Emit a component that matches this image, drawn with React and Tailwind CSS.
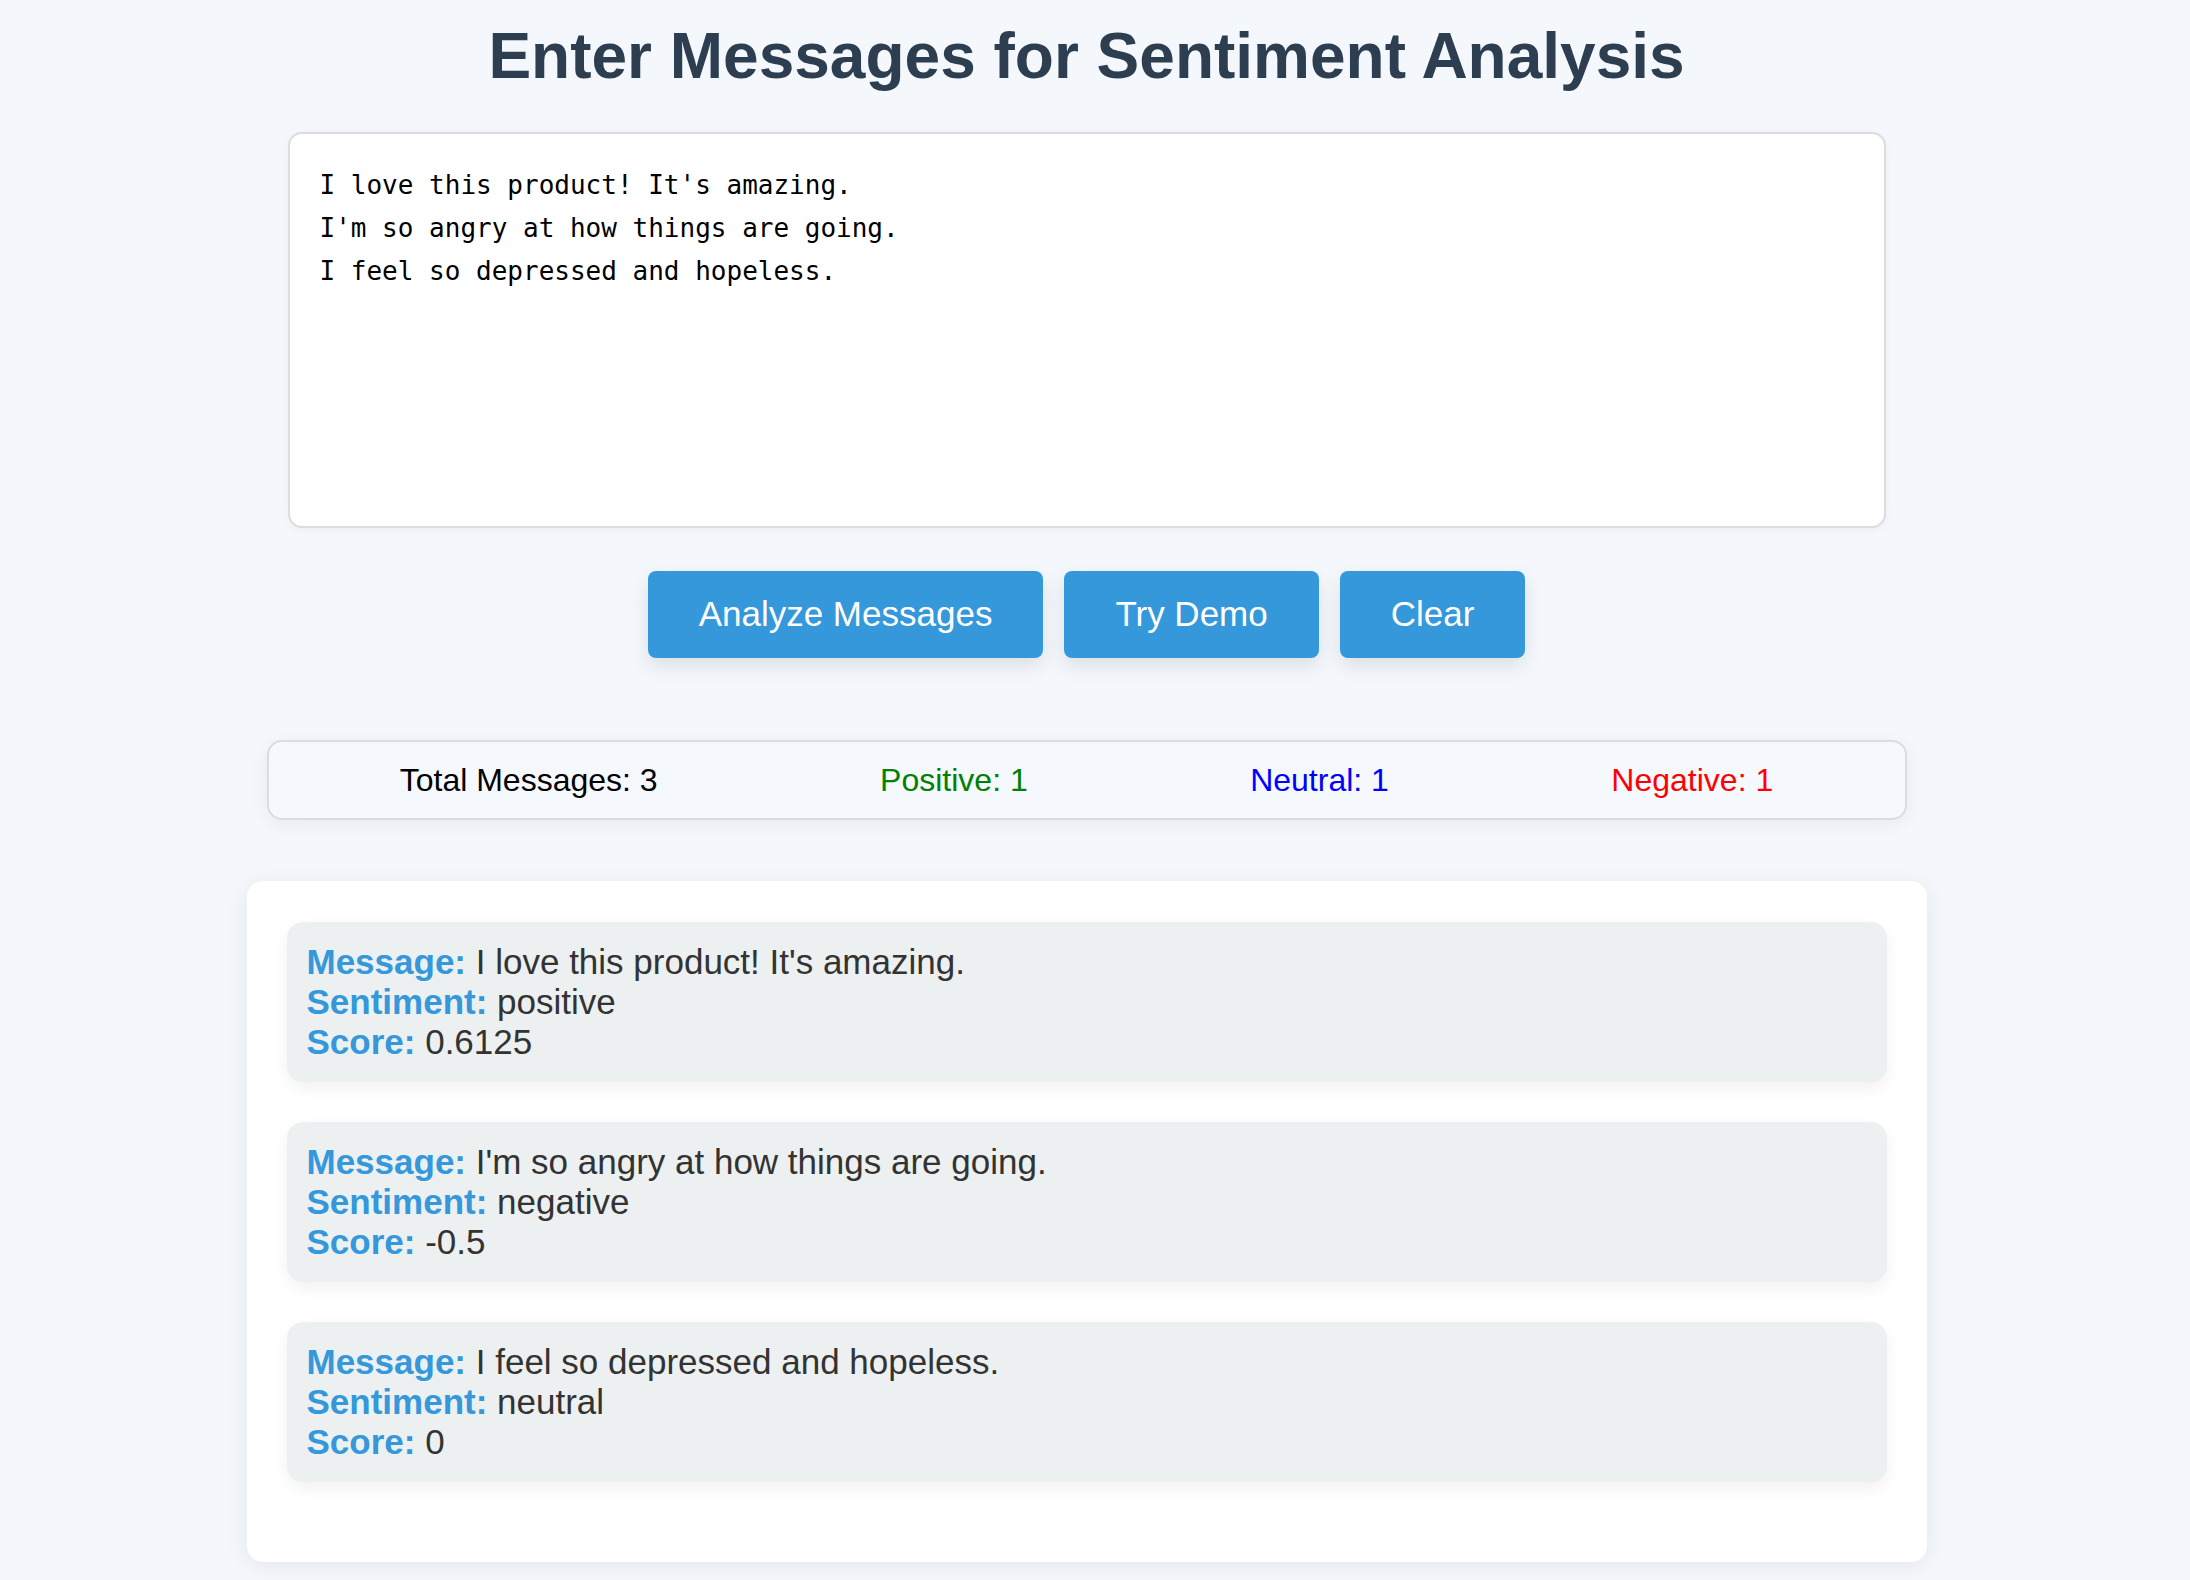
import React from 'react';

const results = [
  { message: "I love this product! It's amazing.", sentiment: 'positive', score: '0.6125' },
  { message: "I'm so angry at how things are going.", sentiment: 'negative', score: '-0.5' },
  { message: 'I feel so depressed and hopeless.', sentiment: 'neutral', score: '0' },
];

const defaultText = "I love this product! It's amazing.\nI'm so angry at how things are going.\nI feel so depressed and hopeless.";

export default function App() {
  return (
    <div className="min-h-screen bg-[#f4f7fb] font-['Liberation_Sans',Arial,sans-serif]">
      <div className="flex flex-col items-center pr-[17px] pt-[19px] pb-[10px]">
        <h1 className="text-[64px] leading-[74px] font-bold text-[#2c3e50] text-center">
          Enter Messages for Sentiment Analysis
        </h1>

        <textarea
          className="mt-[39px] w-[1598px] h-[396px] bg-white border-2 border-[#dddddd] rounded-[14px] p-[30px] font-['DejaVu_Sans_Mono',monospace] text-[26px] leading-[43px] text-black resize-none outline-none shadow-[0_2px_10px_rgba(0,0,0,0.04)]"
          defaultValue={defaultText}
        />

        <div className="mt-[43px] flex gap-[21px]">
          {['Analyze Messages', 'Try Demo', 'Clear'].map((label) => (
            <button
              key={label}
              className="h-[87px] px-[51px] bg-[#3498db] text-white text-[35px] rounded-[8px] shadow-[0_8px_20px_rgba(0,0,0,0.1)]"
            >
              {label}
            </button>
          ))}
        </div>

        <div className="mt-[82px] w-[1640px] h-[80px] px-[20px] flex items-center justify-around bg-[#f5f8fc] border-2 border-[#dcdcdc] rounded-[15px] text-[32px] shadow-[0_4px_20px_rgba(0,0,0,0.06)]">
          <span className="text-black">Total Messages: 3</span>
          <span className="text-[#008000]">Positive: 1</span>
          <span className="text-[#0000ff]">Neutral: 1</span>
          <span className="text-[#ff0000]">Negative: 1</span>
        </div>

        <div className="mt-[61px] w-[1680px] bg-white rounded-[16px] pt-[41px] px-[40px] pb-[40px] shadow-[0_4px_24px_rgba(0,0,0,0.07)]">
          {results.map((r, i) => (
            <div
              key={i}
              className="mb-[40px] p-[20px] bg-[#ecf0f1] rounded-[16px] text-[35px] leading-[40px] text-[#333333] shadow-[0_6px_16px_rgba(0,0,0,0.06)]"
            >
              <div>
                <span className="font-bold text-[#3498db]">Message:</span> {r.message}
              </div>
              <div>
                <span className="font-bold text-[#3498db]">Sentiment:</span> {r.sentiment}
              </div>
              <div>
                <span className="font-bold text-[#3498db]">Score:</span> {r.score}
              </div>
            </div>
          ))}
        </div>
      </div>
    </div>
  );
}
